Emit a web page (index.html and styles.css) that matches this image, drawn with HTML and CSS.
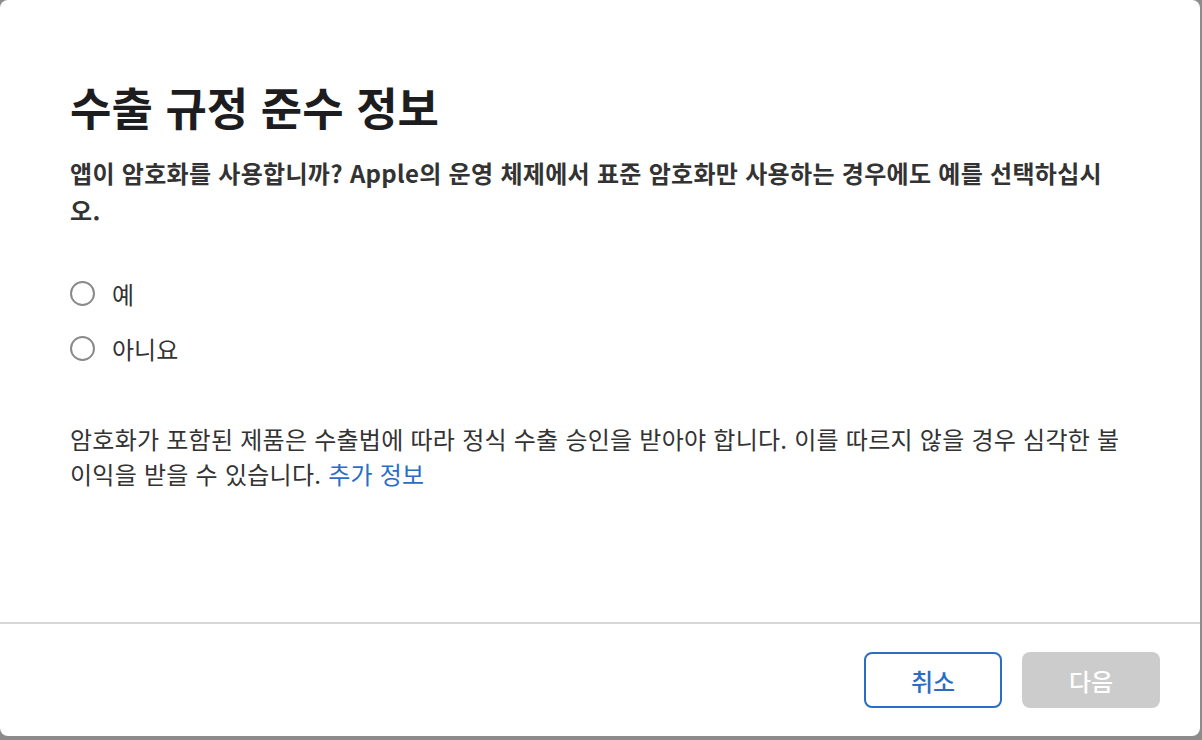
FILE: index.html
```html
<!DOCTYPE html>
<html lang="ko">
<head>
<meta charset="utf-8">
<title>수출 규정 준수 정보</title>
<link rel="stylesheet" href="styles.css">
</head>
<body>
<div class="modal">
  <div class="content">
    <h1 class="title">수출 규정 준수 정보</h1>
    <p class="question">앱이 암호화를 사용합니까? Apple의 운영 체제에서 표준 암호화만 사용하는 경우에도 예를 선택하십시오.</p>
    <div class="options">
      <label class="option"><span class="radio"></span><span class="option-label">예</span></label>
      <label class="option"><span class="radio"></span><span class="option-label">아니요</span></label>
    </div>
    <p class="note">암호화가 포함된 제품은 수출법에 따라 정식 수출 승인을 받아야 합니다. 이를 따르지 않을 경우 심각한 불이익을 받을 수 있습니다. <a class="link" href="#">추가 정보</a></p>
  </div>
  <div class="footer">
    <button class="btn btn-cancel">취소</button>
    <button class="btn btn-next" disabled>다음</button>
  </div>
</div>
</body>
</html>
```
FILE: styles.css
```css
html, body {
  margin: 0;
  padding: 0;
  height: 100%;
}
body {
  background: #8c8c8c;
  font-family: "Noto Sans CJK KR", "Noto Sans", sans-serif;
  color: #333333;
}
.modal {
  width: 1200px;
  height: 736px;
  background: #ffffff;
  border-radius: 8px;
  display: flex;
  flex-direction: column;
  overflow: hidden;
}
.content {
  flex: 1;
  padding: 77px 74px 0 70px;
}
.title {
  margin: 0;
  font-size: 45px;
  line-height: 60px;
  font-weight: 700;
  color: #1d1d1f;
}
.question {
  margin: 17px 0 0 0;
  font-size: 24px;
  line-height: 37px;
  font-weight: 700;
  letter-spacing: 0.3px;
  color: #333333;
}
.options {
  margin-top: 48px;
  display: flex;
  flex-direction: column;
  gap: 21px;
}
.option {
  display: flex;
  align-items: center;
  height: 34px;
}
.radio {
  width: 21px;
  height: 21px;
  border: 2px solid #8a8a8a;
  border-radius: 50%;
  box-sizing: content-box;
  flex: none;
}
.option-label {
  margin-left: 17px;
  font-size: 24px;
  color: #333333;
}
.note {
  margin: 56px 0 0 0;
  font-size: 24px;
  line-height: 35px;
  letter-spacing: 0.25px;
  color: #333333;
}
.link {
  color: #2b6dc6;
  text-decoration: none;
}
.footer {
  height: 112px;
  border-top: 2px solid #d6d6d6;
  display: flex;
  align-items: center;
  justify-content: flex-end;
  gap: 20px;
  padding-right: 40px;
}
.btn {
  width: 138px;
  height: 56px;
  border-radius: 8px;
  font-family: inherit;
  font-size: 24px;
  font-weight: 500;
}
.btn-cancel {
  background: #ffffff;
  border: 2px solid #2b6dc6;
  color: #2b6dc6;
}
.btn-next {
  background: #cccccc;
  border: none;
  color: #ffffff;
}
```
